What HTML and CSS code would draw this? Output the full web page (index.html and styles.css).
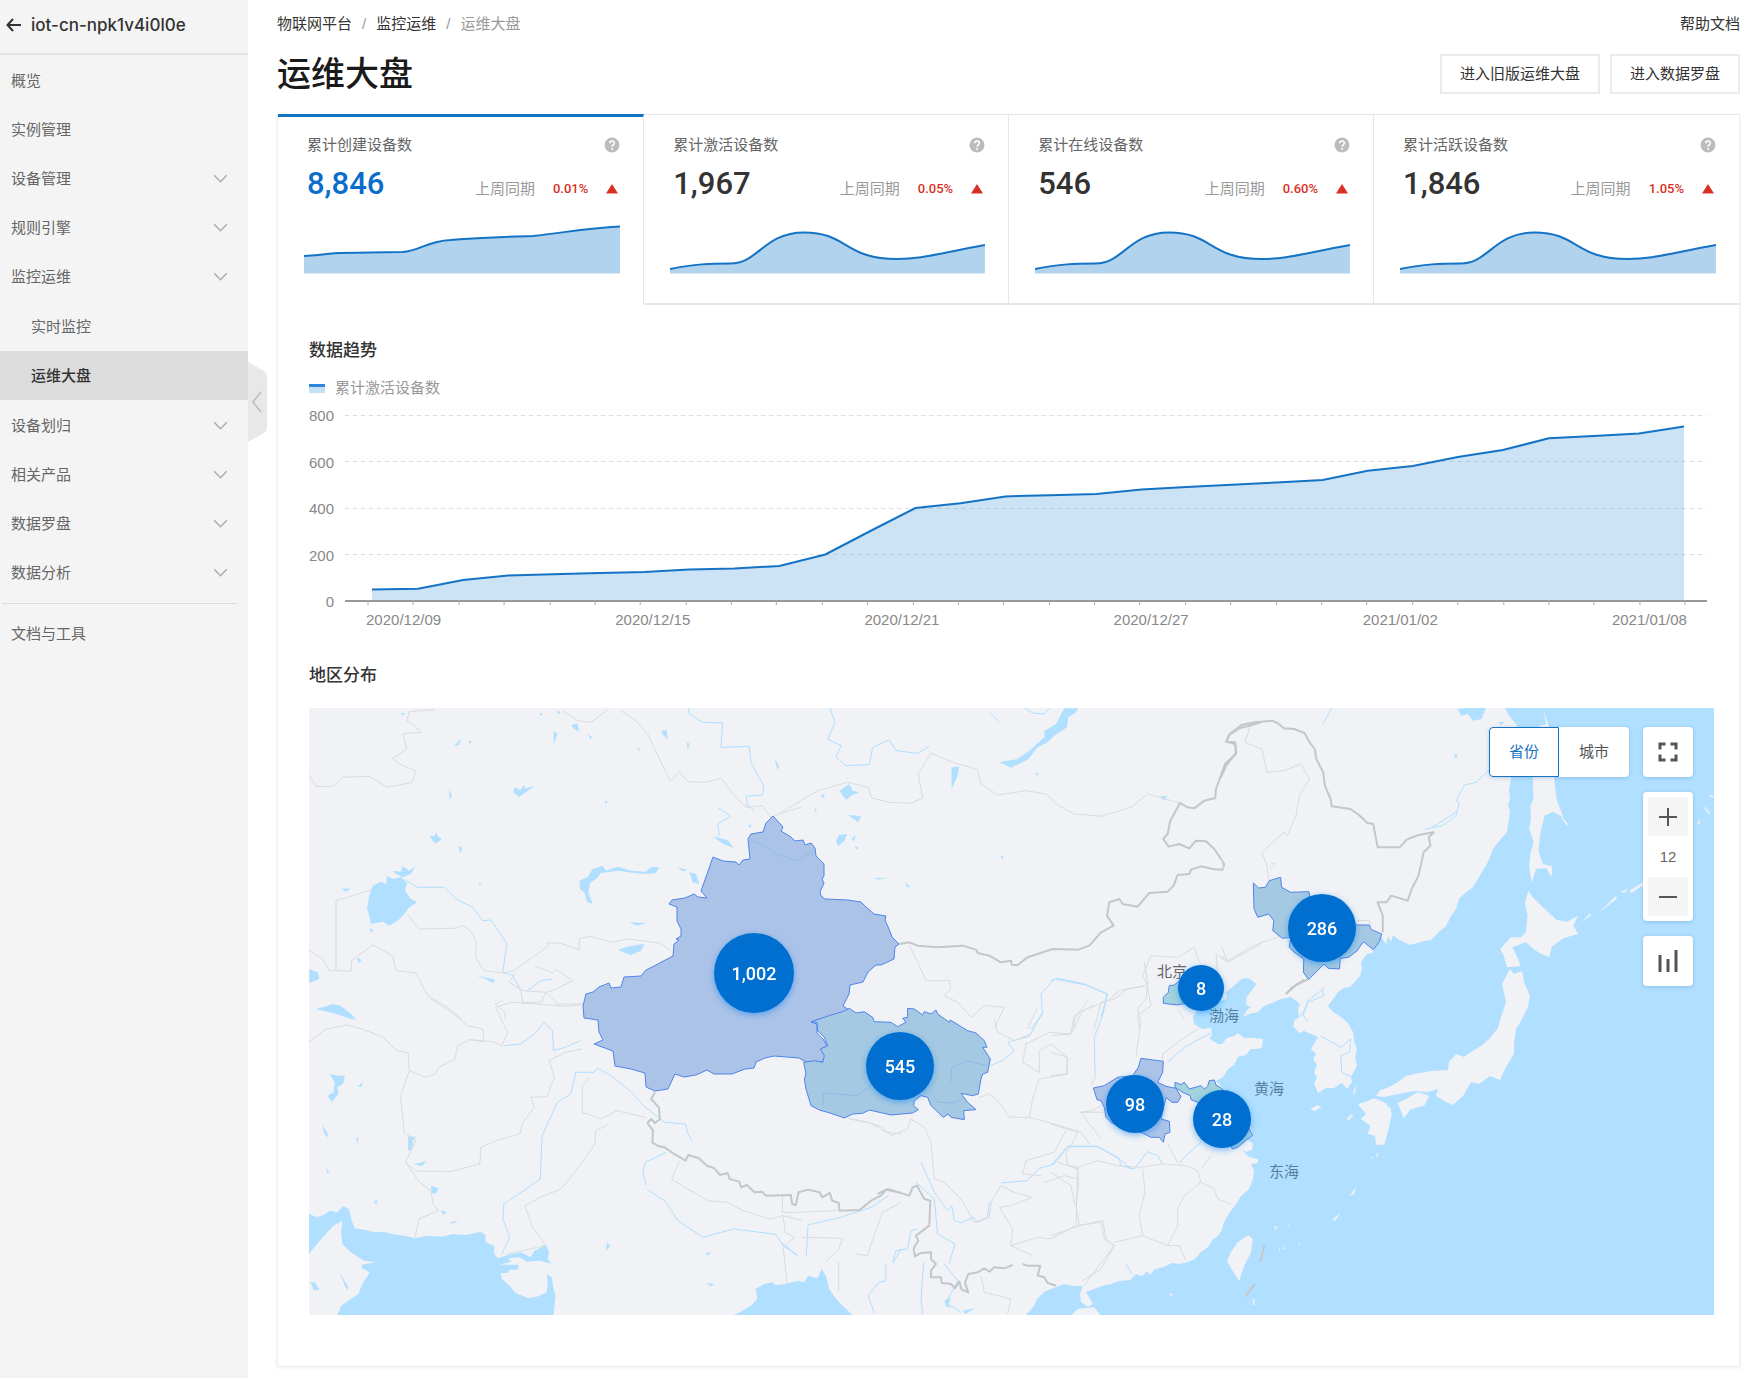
FILE: index.html
```html
<!DOCTYPE html>
<html lang="zh-CN">

<head>
    <meta charset="UTF-8">
    <meta name="viewport" content="width=device-width, initial-scale=1.0">
    <title>运维大盘</title>
    <link rel="stylesheet" href="styles.css">
</head>

<body>
    <!-- shared icons -->
    <svg class="defs" aria-hidden="true">
        <symbol id="chevron" viewBox="0 0 16 10">
            <path d="M1 1.5l7 7 7-7" fill="none" stroke="currentColor" stroke-width="1.6" />
        </symbol>
        <symbol id="help" viewBox="0 0 16 16">
            <circle cx="8" cy="8" r="7.5" fill="#bcbcbc" />
            <path d="M5.7 6.3c0-3.2 4.7-3 4.7-.2 0 1.7-2.3 1.9-2.3 3.6" fill="none" stroke="#fff" stroke-width="1.6" />
            <circle cx="8.1" cy="12" r="1" fill="#fff" />
        </symbol>
        <symbol id="up" viewBox="0 0 12 10">
            <path d="M6 0l6 9.500H0z" fill="#d93026" />
        </symbol>
        <symbol id="wave" viewBox="0 0 315 52" preserveAspectRatio="none">
            <path class="spark-area" d="M0 47C25 42 40 41.500 60 41.500C88 42 94 10.500 134 10.500C178 10.500 174 37 227 37C252 37 266 32 315 23V51.500H0z" />
            <path class="spark-line" d="M0 47C25 42 40 41.500 60 41.500C88 42 94 10.500 134 10.500C178 10.500 174 37 227 37C252 37 266 32 315 23" />
        </symbol>
    </svg>

    <div class="layout">
        <aside class="sidebar">
            <a class="instance" href="#">
                <svg width="16" height="14" viewBox="0 0 16 14"><path d="M7 1L1.500 7 7 13M1.500 7H15" fill="none" stroke="#333" stroke-width="2" /></svg>
                iot-cn-npk1v4i0l0e
            </a>
            <nav>
                <ul class="menu">
                    <li><a class="item" href="#">概览</a></li>
                    <li><a class="item" href="#">实例管理</a></li>
                    <li><button class="item">设备管理<svg class="chevron"><use href="#chevron" /></svg></button></li>
                    <li><button class="item">规则引擎<svg class="chevron"><use href="#chevron" /></svg></button></li>
                    <li>
                        <button class="item">监控运维<svg class="chevron"><use href="#chevron" /></svg></button>
                        <ul class="submenu">
                            <li><a class="item" href="#">实时监控</a></li>
                            <li><a class="item active" href="#">运维大盘</a></li>
                        </ul>
                    </li>
                    <li><button class="item">设备划归<svg class="chevron"><use href="#chevron" /></svg></button></li>
                    <li><button class="item">相关产品<svg class="chevron"><use href="#chevron" /></svg></button></li>
                    <li><button class="item">数据罗盘<svg class="chevron"><use href="#chevron" /></svg></button></li>
                    <li><button class="item">数据分析<svg class="chevron"><use href="#chevron" /></svg></button></li>
                    <li class="docs"><a class="item" href="#">文档与工具</a></li>
                </ul>
            </nav>
            <button class="collapse" aria-label="收起菜单">
                <svg width="20" height="80" viewBox="0 0 20 80">
                    <path d="M0 0L16 9Q19 11 19 14V66Q19 69 16 71L0 80z" fill="#e8e8e8" />
                    <path d="M13 30L5 40 13 50" fill="none" stroke="#bbb" stroke-width="1.500" />
                </svg>
            </button>
        </aside>

        <main class="main">
            <div class="topbar">
                <nav class="breadcrumb">
                    <a href="#">物联网平台</a><span>/</span><a href="#">监控运维</a><span>/</span><span>运维大盘</span>
                </nav>
                <a class="help-link" href="#">帮助文档</a>
            </div>

            <div class="title-row">
                <h1>运维大盘</h1>
                <div class="actions">
                    <button>进入旧版运维大盘</button>
                    <button>进入数据罗盘</button>
                </div>
            </div>

            <div class="panel">
                <div class="cards">
                    <button class="card selected">
                        <span class="card-head">累计创建设备数<svg class="help"><use href="#help" /></svg></span>
                        <span class="card-data"><span class="num">8,846</span><span class="compare">上周同期</span><span class="rate">0.01%</span><svg class="up"><use href="#up" /></svg></span>
                        <svg class="spark" viewBox="0 0 315 52" preserveAspectRatio="none">
                            <path class="spark-area" d="M0 34C22 33 25 31 36 31L98 30C116 29 122 19 146 18C180 15 210 14.500 228 14C258 11 280 6 315 4.500V51.500H0z" />
                            <path class="spark-line" d="M0 34C22 33 25 31 36 31L98 30C116 29 122 19 146 18C180 15 210 14.500 228 14C258 11 280 6 315 4.500" />
                        </svg>
                    </button>
                    <button class="card">
                        <span class="card-head">累计激活设备数<svg class="help"><use href="#help" /></svg></span>
                        <span class="card-data"><span class="num">1,967</span><span class="compare">上周同期</span><span class="rate">0.05%</span><svg class="up"><use href="#up" /></svg></span>
                        <svg class="spark"><use href="#wave" /></svg>
                    </button>
                    <button class="card">
                        <span class="card-head">累计在线设备数<svg class="help"><use href="#help" /></svg></span>
                        <span class="card-data"><span class="num">546</span><span class="compare">上周同期</span><span class="rate">0.60%</span><svg class="up"><use href="#up" /></svg></span>
                        <svg class="spark"><use href="#wave" /></svg>
                    </button>
                    <button class="card">
                        <span class="card-head">累计活跃设备数<svg class="help"><use href="#help" /></svg></span>
                        <span class="card-data"><span class="num">1,846</span><span class="compare">上周同期</span><span class="rate">1.05%</span><svg class="up"><use href="#up" /></svg></span>
                        <svg class="spark"><use href="#wave" /></svg>
                    </button>
                </div>

                <section class="trend">
                    <h2>数据趋势</h2>
                    <div class="legend"><i></i>累计激活设备数</div>
                    <div class="chart">
                        <div class="y-axis"><span>800</span><span>600</span><span>400</span><span>200</span><span>0</span></div>
                        <div class="plot">
                            <svg viewBox="0 0 1361 192" preserveAspectRatio="none">
                                <path class="grid-line" d="M0 1.500H1361M0 47.500H1361M0 94.500H1361M0 140.500H1361" />
                                <path class="area" d="M27 175.400L73 174.700 118 166 163 161.400 208 160.300 254 159 299 158 344 155.600 389 154.500 434 152 480 140.500 525 117 570 94 615 89.300 660 82.400 705 81.200 751 80 796 75.400 841 73 886 70.800 931 68.400 977 66 1022 56.800 1067 52 1112 43 1157 36 1203 24.300 1248 22 1293 19.600 1338 12.600V187H27z" />
                                <path class="axis" d="M0 187H1361" />
                                <path class="ticks" d="M23 187v4M68 187v4M114 187v4M159 187v4M205 187v4M250 187v4M295 187v4M341 187v4M386 187v4M431 187v4M477 187v4M522 187v4M568 187v4M613 187v4M658 187v4M704 187v4M749 187v4M794 187v4M840 187v4M885 187v4M931 187v4M976 187v4M1021 187v4M1067 187v4M1112 187v4M1158 187v4M1203 187v4M1248 187v4M1294 187v4M1339 187v4" />
                                <path class="line" d="M27 175.400L73 174.700 118 166 163 161.400 208 160.300 254 159 299 158 344 155.600 389 154.500 434 152 480 140.500 525 117 570 94 615 89.300 660 82.400 705 81.200 751 80 796 75.400 841 73 886 70.800 931 68.400 977 66 1022 56.800 1067 52 1112 43 1157 36 1203 24.300 1248 22 1293 19.600 1338 12.600" />
                            </svg>
                            <div class="x-axis"><span>2020/12/09</span><span>2020/12/15</span><span>2020/12/21</span><span>2020/12/27</span><span>2021/01/02</span><span>2021/01/08</span></div>
                        </div>
                    </div>
                </section>

                <section class="region">
                    <h2>地区分布</h2>
                    <div class="map">
                        <svg class="map-canvas" viewBox="308 709 1405 607">
                            <!-- Pacific side -->
                            <path class="water" d="M1504 709L1509 718 1516 726 1513 750 1510 780 1508 790 1509 800 1507 806 1509 813 1506 833 1499 841 1492 850 1487 863 1481 873 1472 888 1463 895 1458 900 1455 910 1450 917 1445 927 1438 933 1430 941 1424 942 1409 946 1403 943 1397 940 1392 936 1390 943 1387 937 1385 945 1380 938 1375 947 1371 954 1366 955 1360 963 1361 970 1359 977 1349 988 1343 989 1337 993 1327 1007 1332 1013 1340 1018 1347 1024 1352 1033 1353 1042 1356 1050 1354 1058 1356 1067 1350 1078 1351 1083 1346 1090 1341 1084 1333 1089 1325 1089 1317 1094 1313 1084 1316 1079 1313 1073 1316 1066 1312 1060 1315 1055 1310 1050 1317 1038 1310 1035 1303 1032 1298 1034 1292 1027 1294 1020 1298 1018 1297 1010 1299 1005 1290 998 1280 1000 1271 1004 1263 1007 1257 1013 1248 1015 1242 1018 1246 1011 1250 1008 1244 1005 1242 1002 1248 995 1255 985 1249 980 1243 979 1237 988 1232 993 1225 1000 1213 1005 1203 1010 1195 1013 1192 1018 1193 1025 1201 1030 1210 1029 1211 1035 1209 1040 1217 1045 1221 1045 1226 1039 1233 1037 1237 1034 1243 1039 1253 1039 1262 1040 1261 1048 1257 1050 1250 1050 1245 1056 1237 1058 1233 1066 1227 1070 1222 1078 1215 1082 1223 1090 1232 1098 1240 1110 1247 1120 1252 1135 1243 1139 1235 1143 1246 1140 1252 1145 1251 1151 1245 1153 1240 1150 1248 1158 1257 1160 1257 1164 1250 1165 1253 1172 1252 1180 1248 1190 1240 1197 1236 1204 1229 1213 1223 1223 1221 1231 1217 1237 1212 1240 1207 1248 1200 1253 1194 1260 1187 1263 1178 1265 1171 1264 1163 1268 1154 1270 1149 1276 1146 1272 1141 1277 1135 1275 1129 1281 1118 1282 1110 1285 1101 1287 1093 1290 1085 1293 1089 1300 1092 1305 1087 1308 1080 1303 1079 1295 1082 1287 1072 1287 1063 1285 1055 1288 1050 1290 1043 1293 1036 1300 1033 1307 1025 1316H1714V709z" />

                            <!-- Arabian sea, Bengal bay -->
                            <g transform="translate(300 1000) scale(.3827 .3333)">
                                <path class="water" d="M20 643L40 655 60 648 75 635 95 640 110 622 125 630 132 662 140 688 170 693 190 700 215 698 240 706 270 710 300 718 330 710 370 713 395 705 430 708 470 698 482 708 482 728 505 742 505 765 515 778 540 768 575 760 600 775 610 755 640 738 648 760 645 780 655 795 625 785 590 788 570 775 540 778 550 788 520 797 570 798 565 812 545 812 540 822 522 822 525 840 545 860 560 882 595 898 620 892 642 880 645 850 642 825 655 835 660 870 665 890 660 948H95L105 920 130 900 150 885 160 855 180 820 160 808 158 797 195 790 165 785 130 760 108 735 105 700 108 665 85 680 60 710 35 745 20 765z" />
                                <path class="water" d="M1130 948L1150 938 1178 918 1192 900 1188 870 1210 855 1232 850 1240 858 1265 855 1300 845 1315 850 1325 830 1350 838 1360 810 1372 830 1380 870 1395 895 1410 915 1425 930 1440 948z" />
                                <path class="water" d="M75 225L95 230 115 230 110 255 95 265 98 285 80 310 70 290 85 280 88 250zM148 262l14-12-4 14zM55 378l12 20 6 20-12-14zM24 848l14 4 10 20-14 2zM100 820l24 45-4 8zM92 45L40 30 65 22 100 18 120 40 145 65zM78 530zM340 560l20 8-8 16-12-2zM190 605h10l-4 14zM365 632l16 8-10 8zM390 670l22-6-16 10zM295 495l34-8-14 14zM280 412l22 2-10 10-2 30h-10zM800 730l8 10-12 16zM1058 762l14-4-10 12zM1060 852l22 4-12 6zM144 415l6 2-2 20zM66 505l8 18h-6z" />
                                <path class="river" d="M525 765L545 715 528 660 530 615 575 580 625 540 630 410 670 310 705 285 718 220 765 220 775 208 810 230 860 275 895 320 950 370 1005 375 1010 400 1022 428M955 460L900 490 893 520 902 560M905 572L950 605 985 665 1050 715 1130 690 1240 706 1260 740 1300 772M530 140L575 135 610 105 635 70 657 95 660 155 690 145 730 125" />
                                <path class="river" d="M1535 590L1490 625 1410 655 1325 678 1320 770M1568 750L1548 790M1528 795V845L1510 850 1482 890 1498 943M1365 320L1368 284 1450 290 1490 262" />
                                <path class="border" d="M20 130L65 90 120 78 160 90 215 115 250 155 280 162 283 215 260 290 270 400 300 425 273 490 300 516 390 518 467 495 470 445 510 425 572 405 580 370 610 325 600 295 642 293 662 235 648 185 690 160 735 150M283 215L325 235 350 225 360 205 402 180 410 140 440 122 478 128 475 90 435 80 400 45 340 0M440 122L500 128 525 140 540 100 508 25 550 10 700 22 738 15M273 490L310 550 340 575 345 615 358 635 308 660 298 716M805 375L770 395 768 435 735 490 680 570 625 595 585 620 605 685 640 740M540 765L600 750 640 738M990 485L968 540 1010 570 1065 605 1115 610 1155 635 1225 660 1260 650 1310 665M1258 590V640L1290 640 1400 635M1260 650L1265 700 1290 715 1260 745 1270 855M1310 715L1415 718 1405 750 1370 790M1568 610L1520 640 1500 700 1480 770 1450 765M1405 790V875M755 235L735 260 735 340 785 360 825 335 900 355M1430 358L1485 370 1530 400 1568 405" />
                                <path class="border-dark" d="M925 280L915 300 935 325 938 360 925 372 915 360 905 372 920 395 918 430 935 442 950 445 975 465 1005 485 1012 468 1040 478 1060 500 1080 508 1095 528 1115 522 1120 540 1145 548 1150 565 1165 558 1185 580 1205 578 1215 590 1280 588 1283 615 1293 618 1300 580 1325 572 1355 580 1362 595 1382 582 1388 605 1405 612 1407 635 1460 633 1490 605 1515 590 1530 572 1568 582" />
                            </g>

                            <!-- Kazakhstan, west Siberia -->
                            <g transform="translate(300 700) scale(.3333)">
                                <path class="water" d="M215 560L240 548 255 555 258 530 275 540 300 535 318 550 312 575 330 600 348 610 325 625 310 645 290 665 265 680 245 668 210 675 205 650 198 630 205 590zM275 515L300 518 305 502 325 515 343 502 330 525 305 535 285 525zM835 545L860 535 875 510 905 500 915 515 950 503 990 515 1035 518 1050 505 1075 505 1065 522 1035 525 1000 522 950 515 900 522 885 540 868 550 862 580 875 615 858 608 850 580 838 572zM1165 520L1185 525 1195 555 1175 550zM950 753L985 742 1030 735 1020 755 990 768zM985 670l50 2-25 8zM25 810L50 820 55 840 25 852zM45 932L95 915 125 925 165 958 110 937zM640 265l18 8 12-16 2 12 30-8-30 20-18 12-16-12zM385 410l15 2 5-12 8 14 10 6-20 14zM1235 412l45 12 18 22-30-10zM1083 95l14-2 4 30-18-20zM810 78l20-4 4 24-14-8zM758 95l12 10-12 32zM472 440l12 8-6 16zM445 270l8 20-8 10zM522 828l60 14-5 10-28-14zM168 775l14 8-10 10zM860 105l14 10-6 6zM460 140l20-22-6 20zM120 570l30-2-15 10zM1130 505l30 8-14 4zM1340 380l12-4-4 10zM300 42h12l-6 8zM768 35l10 4-6 8zM715 42l10 2-6 8zM1158 130l8 4-6 20zM1420 180l14 20-4 14zM205 690h12l-6 12zM505 125l8 4-8 6zM1010 148l8 2-6 6zM912 305l10 4-8 6zM535 550l6 6-6 4z" />
                                <path class="river" d="M1162 27L1165 45 1205 70 1265 72 1260 145 1345 142 1350 190 1388 260 1385 288 1335 292 1340 320 1362 335M1250 325L1290 352 1250 375 1255 410M318 545L350 565 430 565 465 600 515 625 545 665 570 663 618 735 605 820 635 830 660 875M1340 425L1380 435 1420 462 1490 487M755 840L720 845 680 875" />
                                <path class="border" d="M400 32L325 38 318 65 340 80 360 100 305 105 318 150 275 178 295 195 343 215 335 250 258 265 205 232 125 235 95 263 45 262 25 230M215 572L105 605V815L150 817 152 785 215 738 275 770 285 815 345 822 380 890 440 925 482 960M25 755L65 780 85 815H105M318 645L355 690 460 688 487 680 512 700 525 725V775L548 815 605 822 640 815 680 785 745 740 735 732 775 732 835 752V718L870 712 930 730 980 720 1075 732 1110 755M640 825L625 850 665 875 735 880 720 910 665 910 660 875M700 800L755 822 765 812 815 845 755 875 735 880M740 885L770 915 845 915M605 905L582 915 612 940V960M960 35L1005 65 1040 105 1108 248 1135 218 1160 248 1215 250 1260 238 1300 290 1335 325 1385 320 1410 355 1450 340 1500 325M785 35L830 65 870 70 920 32" />
                            </g>

                            <!-- Mongolia, Baikal -->
                            <g transform="translate(780 700) scale(.3333)">
                                <path class="water" d="M655 190L710 180 745 155 790 115 790 95 825 75 850 28H892L882 42 862 55 858 85 820 110 800 130 770 145 740 182 690 206zM175 275L195 262 205 255 215 275 235 280 210 290 195 302zM512 205L535 203 528 235 512 270zM200 347L240 352 232 370zM165 425L175 408 198 405 190 425 172 442zM1140 292l20-2-12 16zM120 288l12-2-6 14zM210 420l14-12-4 18zM220 440l14 6-6 6zM280 538l40-2-30 6zM370 550l18 12-8 4zM100 328l8 4-4 8zM660 470l10 4-8 6zM765 220l8 4-6 8z" />
                                <path class="river" d="M147 27L162 70 140 120 180 140 165 175 195 200 265 197 275 145 325 123 345 155 410 163 445 142M730 27L755 42 790 45 805 27M0 468L55 487 95 455M750 990L785 945 780 885 820 840 915 858 980 885 960 955M625 40L655 70" />
                                <path class="border" d="M0 340L110 275 200 250 262 265 272 297 325 310 390 313 425 297 412 225 450 162 515 190 590 212 600 255 650 288 735 275 795 285 830 318 880 345 960 352 1050 325 1100 285 1197 312M385 740L410 790 435 845 505 845 510 870 490 890 530 910 570 955 610 920 670 925 640 990M1440 735L1340 790 1305 765 1310 820M1255 790L1240 745 1190 775 1110 770 1085 830 1100 860 1040 870 1000 900 960 910 940 990M1100 865L1110 920 1070 950 1075 990M770 925L740 990M920 905L880 960V990" />
                                <path class="border-dark" d="M355 735L385 730 410 740 470 745 545 740 585 752 590 762 625 770 660 790 690 785 692 797 710 798 740 775 815 750 892 752 925 740 960 700 998 680 978 650 985 610 1015 600 1025 615 1070 623 1105 582 1160 578 1178 560 1190 528 1225 525 1230 512 1260 502 1295 510 1325 512 1330 495 1300 450 1275 427 1245 425 1225 448 1195 435 1163 443 1147 420 1160 405 1168 365 1197 312 1220 325 1240 328 1270 305 1303 297 1305 270 1318 235 1332 195 1365 165 1362 135 1337 128 1345 108 1375 88 1405 80 1440 70" />
                            </g>

                            <!-- north-east and Japan -->
                            <g transform="translate(1220 700) scale(.3406 .3333)">
                                <path class="water" d="M695 30L720 27H778L765 60 740 65 725 45 705 50zM683 165l12 2-6 12zM815 70l20-2-15 10zM15 880L40 858 60 840 100 850 100 862 75 890 75 915 20 925z" />
                                <path class="land" d="M945 27L955 75 935 80 915 240 918 300 908 320 910 360 905 390 918 430 908 465 905 500 912 552 925 510 955 508 970 535 973 502 945 495 932 455 938 400 950 350 975 338 1005 355 985 300 978 240 965 90zM903 575L915 595 945 625 985 662 1015 668 1048 650 1035 680 1048 705 1005 718 970 745 965 775 940 765 920 752 895 730 855 745 870 775 880 802 840 805 830 770 820 750 850 715 880 715 895 700 900 650 892 610zM1058 670L1085 642 1085 650zM1110 640L1160 590 1162 600zM1170 580L1192 570 1190 580zM1200 575L1240 548V558L1205 582z" />
                                <path class="land-line" d="M1420 325L1435 345M1435 290L1445 295M1400 375L1405 365M1000 355L1018 378" />
                                <path class="river" d="M600 390L650 380 690 350 700 310 690 305 715 258 750 250 790 210M620 385L690 340M325 27L300 75M300 870L255 905 245 940 220 960" />
                                <path class="border" d="M85 85L70 130 120 150 135 220 185 215 235 195 260 240 230 290 220 350 195 410 185 400 120 460 135 500 140 545M145 490L160 495 145 510M200 700L150 720 95 740 20 785 0 770M0 740L20 790M400 665H435L440 680M0 480L8 510" />
                                <path class="border-dark" d="M0 235L15 200 45 160 42 130 15 128 25 105 60 78 100 70 150 65 165 72 185 88 215 90 245 102 260 130 275 150 280 180 300 220 305 260 322 300 325 322 380 330 405 348 430 372 447 375 460 445 525 445 545 422 580 408 625 400 610 415 615 440 595 460 580 530 560 570 548 605 500 590 485 610 460 610 475 650 475 700M245 842L210 865 190 885" />
                            </g>
                            <path class="land" d="M1509 970L1513 975 1521 972 1523 983 1529 997 1527 1008 1520 1022 1515 1030 1513 1045 1513 1055 1505 1068 1499 1081 1489 1077 1478 1085 1470 1083 1462 1097 1452 1106 1443 1102 1435 1097 1437 1090 1427 1093 1413 1092 1397 1095 1383 1098 1375 1097 1379 1091 1383 1090 1390 1087 1397 1083 1405 1077 1413 1075 1430 1072 1447 1071 1448 1063 1455 1055 1463 1058 1470 1053 1480 1047 1488 1040 1497 1029 1500 1018 1505 1003 1501 985z" />

                            <!-- east China -->
                            <g transform="translate(1050 960) scale(.3333)">
                                <path class="land" d="M1040 432L1065 420 1100 400 1135 410 1120 440 1080 450 1058 478zM920 435L945 428 970 418 1000 430 1020 450 1022 470 1010 520 1000 557 975 557 972 530 950 525 958 500 930 480 945 465zM778 450L800 438 812 445 790 457zM593 828L605 840 600 880 580 920 573 940 565 967 545 935 528 905 540 880 560 850zM62 1068L80 1050 130 1045 148 1068zM845 780l25-18-20 25zM895 712l20-28-5 20zM670 808l8-8zM975 590l8-14-4 20zM960 592l6 4-6 4zM1065 312l12-12zM885 480l20-18-8 14zM355 1003l12 2-8 6zM682 870l8 2zM742 853l8 2z" />
                                <path class="land-line" d="M670 810L678 802M908 405L914 385M684 871h4M742 854h4M710 800h4M608 1020v18M697 868h6M890 482L905 468" />
                                <path class="river" d="M0 65L20 58 100 75 168 105 155 170 130 235 132 350M350 310L400 265 480 222M0 620L50 562 140 562 205 600 210 620 250 630 290 578 320 590 335 615M385 612L410 585 450 550M815 85L818 110 770 130 755 165 770 190M810 232L870 265 900 240 895 280 870 290 872 340 905 355M225 915L243 945" />
                                <path class="border" d="M280 80L205 95 170 125 95 155 60 225 0 230M280 10L290 70 285 120 260 150 270 190 255 290M335 320L335 285 380 250 440 210M135 350L120 380M0 280L50 295 45 345 0 350M155 460L90 460 120 500 150 540M0 495L80 520 60 560 45 580 50 620 80 625M80 625L140 605 200 620 270 625 330 615 405 620 440 635 450 670 400 710 380 750 380 800 350 860M80 625L82 680 75 740 85 800 0 830M85 800L155 785 165 840 190 860 150 930 95 965M275 630L282 700 265 770 275 830 190 850M275 830L350 860 385 860 405 905M450 670L490 690 500 720 540 735M350 555L380 610M480 590L450 630M400 180L380 150M0 640L60 680 72 740" />
                                <path class="border-dark" d="M640 860L628 910M612 975L583 1013M770 62L735 78 705 105M0 975L15 980" />
                            </g>

                            <!-- south-west -->
                            <g transform="translate(780 980) scale(.3333)">
                                <path class="water" d="M490 965l20-10-8 22 8 10-15-5zM545 995l38-8-30 18z" />
                                <path class="river" d="M420 550L460 640 500 695 512 680 520 725 540 732 578 715 590 730 620 715 625 670M405 610L460 660 470 765 522 795 505 852M490 855L530 905 515 935 495 970 540 1000M628 260L665 245 700 215 680 190 745 172 785 100M660 612L740 605 775 568 820 555 860 503 950 503 1010 535 1050 570M410 750L390 755 380 810 345 815 335 850M428 850L420 960 425 1005M0 790L50 830" />
                                <path class="border" d="M595 355L625 345 655 370 685 415 745 415 755 360 775 300 860 285 858 235 810 195 775 215V280L725 250 735 195 805 160 870 165 880 110 935 80M640 120L650 160 700 185 750 165M745 415L820 435 900 460 925 495M895 400L935 395 960 380M855 455L820 520 735 545 725 585 780 590M390 420L430 445 450 490 460 600 490 610 540 660 580 730 625 715 630 670 660 620 700 640 755 655 690 680 655 685 695 750 690 800 770 775 810 780 885 740 890 570 830 550M690 800L755 830M205 420L260 430 305 445 330 470 380 450 390 420M890 740L960 730 970 780 1000 800 910 920M600 890L610 940 690 960 680 1005M790 610L850 590 890 600" />
                                <path class="border-dark" d="M290 645L320 630 385 650 395 625 408 620 430 660 448 665 445 740 405 770 412 785 398 808 402 832 420 822 450 820 450 840 465 855 450 875 450 895 480 895 482 912 510 915 522 928 535 908 542 932 562 940 552 912 562 885 590 880 610 868 625 878 640 865 670 868 695 858M725 855L740 860 778 860 770 890 790 895 800 912 825 920" />
                            </g>

                            <!-- highlighted provinces -->
                            <path class="province" fill="#acc3e8" d="M772 817L782 828 780 832 790 838 794 842 802 841 804 846 810 844 814 849 815 857 823 865 823 877 821 880 823 884 819 893 820 897 824 900 847 901 860 903 865 908 873 915 885 917 884 921 888 930 891 938 898 945 894 948 893 960 880 966 875 966 867 973 862 983 849 986 848 995 842 1007 848 1011 825 1022 810 1023 816 1025 816 1034 822 1040 826 1047 820 1050 824 1057 822 1063 805 1063 798 1059 773 1057 764 1059 755 1063 753 1069 744 1070 731 1075 713 1075 706 1071 695 1076 683 1078 674 1075 667 1090 654 1092 645 1088 644 1074 630 1070 614 1067 612 1052 593 1045 602 1041 598 1033 597 1021 583 1019 582 1007 585 995 592 993 598 988 608 984 610 989 620 988 623 978 640 977 645 971 653 967 672 957 673 945 678 941 675 940 680 937 680 930 676 922 676 908 668 905 671 901 684 899 693 895 697 898 706 899 700 892 712 858 722 862 735 863 738 866 742 861 749 860 747 840 750 835 762 833 765 824z" />
                            <path class="river faint" d="M747 841L760 845 775 855 797 862 812 851" />
                            <g transform="translate(780 980) scale(.3333)">
                                <path class="province" fill="#a5c9e2" d="M90 128L160 105 185 98 205 88 225 102 250 98 275 115 280 128 330 130 350 143 375 130 365 118 380 115 380 88 400 90 425 108 430 98 450 105 465 93 470 105 505 130 508 123 560 155 585 162 610 185 618 205 605 205 628 240 620 280 605 285 600 300 592 345 575 350 540 343 560 370 585 392 548 395 550 422 510 415 502 405 487 415 450 380 440 355 420 350 400 365 398 380 412 392 395 402 330 408 265 393 245 403 215 405 190 417 150 403 115 393 90 380 75 330 70 300 75 285 68 250 100 245 125 250 130 230 118 210 140 200 130 175 110 155 108 130z" />
                                <path class="river faint" d="M125 380L128 342 225 350 265 325M510 310L512 265 560 247 620 260M450 335L470 370 515 372 545 358" />
                            </g>
                            <g transform="translate(1220 700) scale(.3406 .3333)">
                                <path class="province" fill="#a5c9e2" d="M95 552L110 567 130 565 142 545 175 535 178 565 205 580 258 578 265 610 400 678H435L442 692 472 705 465 728 447 752 418 728 400 755 375 775 350 778 348 810 315 808 303 795 257 842 242 820 243 780 215 760 200 745 205 715 180 718 152 695 155 665 140 645 108 655 97 630z" />
                            </g>
                            <g transform="translate(1050 960) scale(.3333)">
                                <path class="province" fill="#a3d3dc" d="M385 65L370 78 355 80 352 100 337 115 337 133 378 138 420 130V75z" />
                                <path class="province" fill="#acc3e8" d="M270 298L300 302 337 307 335 340 320 370 345 382 375 388 390 413 380 430 362 430 345 415 330 480 355 487 357 520 342 525 337 550 325 535 300 535 270 520 200 500 180 490 165 475 160 445 150 425 138 422 127 387 160 380 200 355 245 350 262 325z" />
                                <path class="province" fill="#a3d3dc" d="M372 370L390 377 400 370 415 390 450 380 460 390 470 382 475 365 490 363 495 378 515 390 590 500 605 528 560 565 545 570 440 430 420 422 418 410 395 400 372 385z" />
                            </g>

                            <text class="place" x="1156" y="978">北京</text>
                            <text class="place sea" x="1208" y="1022">渤海</text>
                            <text class="place sea" x="1253" y="1095">黄海</text>
                            <text class="place sea" x="1268" y="1178">东海</text>

                            <g class="pin"><circle cx="753" cy="974" r="40" /><text x="753" y="981">1,002</text></g>
                            <g class="pin"><circle cx="899" cy="1067" r="34" /><text x="899" y="1074">545</text></g>
                            <g class="pin"><circle cx="1321" cy="929" r="34" /><text x="1321" y="936">286</text></g>
                            <g class="pin"><circle cx="1200" cy="989" r="23" /><text x="1200" y="996">8</text></g>
                            <g class="pin"><circle cx="1134" cy="1105" r="29" /><text x="1134" y="1112">98</text></g>
                            <g class="pin"><circle cx="1221" cy="1120" r="29" /><text x="1221" y="1127">28</text></g>
                        </svg>

                        <div class="map-tools">
                            <div class="switch">
                                <button class="on">省份</button>
                                <button>城市</button>
                            </div>
                            <div class="tool-col">
                                <button class="tool" aria-label="全屏">
                                    <svg width="20" height="20" viewBox="0 0 20 20"><path d="M2 7.500V2H7.500M12.500 2H18V7.500M18 12.500V18H12.500M7.500 18H2V12.500" fill="none" stroke="#555" stroke-width="3" /></svg>
                                </button>
                                <div class="zoom">
                                    <button aria-label="放大"><svg width="18" height="18" viewBox="0 0 18 18"><path d="M9 0V18M0 9H18" stroke="#555" stroke-width="2" /></svg></button>
                                    <span>12</span>
                                    <button aria-label="缩小"><svg width="18" height="18" viewBox="0 0 18 18"><path d="M0 9H18" stroke="#555" stroke-width="2" /></svg></button>
                                </div>
                                <button class="tool" aria-label="统计">
                                    <svg width="20" height="22" viewBox="0 0 20 22"><path d="M2 5V22M10 9V22M18 0V22" stroke="#555" stroke-width="3" /></svg>
                                </button>
                            </div>
                        </div>
                    </div>
                </section>
            </div>
        </main>
    </div>
</body>

</html>
```
FILE: styles.css
```css
* {
    box-sizing: border-box;
    margin: 0;
    padding: 0;
}

body {
    font-family: "Liberation Sans", "Noto Sans CJK SC", sans-serif;
    font-size: 15px;
    line-height: 20px;
    color: #333;
    background: #fff;
}

button {
    font: inherit;
    color: inherit;
    border: none;
    background: none;
    cursor: pointer;
}

a {
    color: inherit;
    text-decoration: none;
}

ul {
    list-style: none;
}

.defs {
    position: absolute;
    width: 0;
    height: 0;
}

.layout {
    display: flex;
    min-height: 100vh;
}

/* sidebar */
.sidebar {
    position: relative;
    flex: 0 0 248px;
    background: #f4f4f4;
}

.instance {
    display: flex;
    align-items: center;
    gap: 9px;
    height: 55px;
    padding: 0 6px 4px;
    border-bottom: 2px solid #e6e6e6;
    font-family: Inter, sans-serif;
    font-size: 17px;
    font-weight: 500;
}

.menu {
    padding-top: 1px;
}

.item {
    display: flex;
    align-items: center;
    justify-content: space-between;
    width: 100%;
    height: 49px;
    padding: 0 20px 0 11px;
    color: #666;
}

.submenu {
    padding: 1px 0;
}

.submenu .item {
    padding-left: 31px;
}

.item.active {
    background: #dcdcdc;
    color: #333;
    font-weight: 500;
}

.chevron {
    width: 15px;
    height: 9px;
    color: #aaa;
}

.docs {
    margin: 6px 11px 0 2px;
    padding-top: 5px;
    border-top: 1px solid #dcdcdc;
}

.docs .item {
    padding-left: 9px;
}

.collapse {
    position: absolute;
    top: 362px;
    left: 100%;
    height: 80px;
}

/* main */
.main {
    flex: 1;
    min-width: 0;
    padding: 14px 14px 11px 29px;
}

.topbar,
.title-row {
    display: flex;
    align-items: center;
    justify-content: space-between;
}

.breadcrumb {
    display: flex;
    gap: 10px;
}

.breadcrumb span {
    color: #999;
}

.title-row {
    margin: 16px 0;
    height: 48px;
}

h1 {
    font-size: 34px;
    line-height: 48px;
    font-weight: 500;
    color: #1a1a1a;
}

.actions {
    display: flex;
    gap: 10px;
}

.actions button {
    height: 40px;
    padding: 0 18px;
    border: 2px solid #ebebeb;
}

.panel {
    border: 1px solid #ededed;
    border-top: none;
    box-shadow: 0 1px 4px rgba(0, 0, 0, 0.06);
}

/* stat cards */
.cards {
    display: grid;
    grid-template-columns: calc(25% + 1px) repeat(3, 1fr);
}

.card {
    display: flex;
    flex-direction: column;
    padding: 20px 23px 29px 26px;
    border: 1px solid #e6e6e6;
    border-left: none;
    border-bottom-width: 2px;
    text-align: left;
}

.card:last-child {
    border-right: none;
}

.card.selected {
    border-top: 3px solid #1473c5;
    border-bottom-color: transparent;
    padding-top: 18px;
}

.card-head,
.card-data {
    display: flex;
    align-items: center;
    padding-left: 3px;
    color: #666;
}

.card-head {
    justify-content: space-between;
}

.help {
    width: 16px;
    height: 16px;
}

.card-data {
    margin: 8px 0 17px;
    height: 42px;
}

.num {
    flex: 1;
    font-family: Roboto, sans-serif;
    font-size: 31px;
    font-weight: 500;
    color: #333;
}

.selected .num {
    color: #0a6ccb;
}

.compare,
.rate,
.up {
    margin-top: 9px;
}

.compare {
    color: #999;
}

.rate {
    margin-left: 18px;
    font-family: Roboto, sans-serif;
    font-size: 13px;
    font-weight: 500;
    color: #d93026;
}

.up {
    width: 12px;
    height: 10px;
    margin-left: 18px;
    margin-right: 2px;
}

.spark {
    display: block;
    width: 100%;
    height: 52px;
}

.spark-area {
    fill: #b2d3ee;
}

.spark-line {
    fill: none;
    stroke: #1473c5;
    stroke-width: 2px;
    vector-effect: non-scaling-stroke;
}

/* trend chart */
.trend,
.region {
    padding: 34px 25px 0 31px;
}

h2 {
    font-size: 17px;
    line-height: 24px;
    font-weight: 500;
}

.legend {
    display: flex;
    align-items: center;
    gap: 10px;
    margin-top: 15px;
    color: #999;
}

.legend i {
    width: 16px;
    height: 9px;
    border-top: 3px solid #2b86d6;
    background: #c5dff5;
}

.chart {
    display: flex;
    gap: 11px;
    margin-top: 16px;
    color: #888;
}

.y-axis {
    display: flex;
    flex-direction: column;
    justify-content: space-between;
    height: 206px;
    margin-top: -8px;
    text-align: right;
}

.plot {
    flex: 1;
    padding-right: 7px;
}

.plot svg {
    display: block;
    width: 100%;
    height: 192px;
}

.grid-line {
    stroke: #ddd;
    stroke-dasharray: 4 4;
}

.area {
    fill: rgba(43, 134, 214, 0.24);
}

.line {
    fill: none;
    stroke: #1473c5;
    stroke-width: 2px;
}

.axis {
    stroke: #999;
    stroke-width: 2px;
}

.ticks {
    stroke: #aaa;
}

.x-axis {
    display: flex;
    justify-content: space-between;
    margin-top: 4px;
    padding: 0 20px 0 21px;
}

/* map */
.region {
    padding-bottom: 51px;
}

.map {
    position: relative;
    margin-top: 20px;
}

.map-canvas {
    display: block;
    width: 100%;
    background: #f0f2f6;
}

.water {
    fill: #b0dfff;
}

.land {
    fill: #f0f2f6;
}

.land-line,
.river,
.border,
.border-dark {
    fill: none;
    stroke-width: 1px;
    stroke-linejoin: round;
    vector-effect: non-scaling-stroke;
}

.land-line {
    stroke: #e6eef6;
    stroke-width: 2px;
}

.river {
    stroke: #b0dfff;
}

.river.faint {
    stroke: #8fbde6;
}

.border {
    stroke: #d9dbdd;
}

.border-dark {
    stroke: #c4c7c9;
    stroke-width: 2px;
}

.province {
    stroke: #4f84ea;
    stroke-width: 1px;
    vector-effect: non-scaling-stroke;
}

.place {
    font-size: 15px;
    fill: #666;
}

.place.sea {
    fill: #55809e;
}

.pin {
    filter: drop-shadow(0 2px 3px rgba(0, 128, 240, 0.5));
}

.pin circle {
    fill: #006fd0;
}

.pin text {
    font-family: Roboto, sans-serif;
    font-size: 18px;
    font-weight: 500;
    text-anchor: middle;
    fill: #fff;
}

/* tools over the map */
.map-tools {
    position: absolute;
    top: 19px;
    right: 21px;
    display: flex;
    align-items: flex-start;
    gap: 14px;
}

.switch,
.tool,
.zoom {
    border-radius: 4px;
    background: #fff;
    box-shadow: 0 1px 4px rgba(0, 60, 120, 0.2);
}

.switch {
    display: flex;
}

.switch button {
    width: 70px;
    height: 50px;
    color: #555;
}

.switch .on {
    border: 1px solid #1473c5;
    border-radius: 4px 0 0 4px;
    color: #1473c5;
}

.tool-col {
    display: flex;
    flex-direction: column;
    gap: 15px;
}

.tool,
.zoom button {
    display: flex;
    align-items: center;
    justify-content: center;
}

.tool {
    width: 50px;
    height: 50px;
}

.zoom {
    display: flex;
    flex-direction: column;
    width: 50px;
    padding: 5px;
    text-align: center;
    color: #666;
}

.zoom button {
    height: 39px;
    background: #f5f5f5;
}

.zoom span {
    line-height: 41px;
}
```
